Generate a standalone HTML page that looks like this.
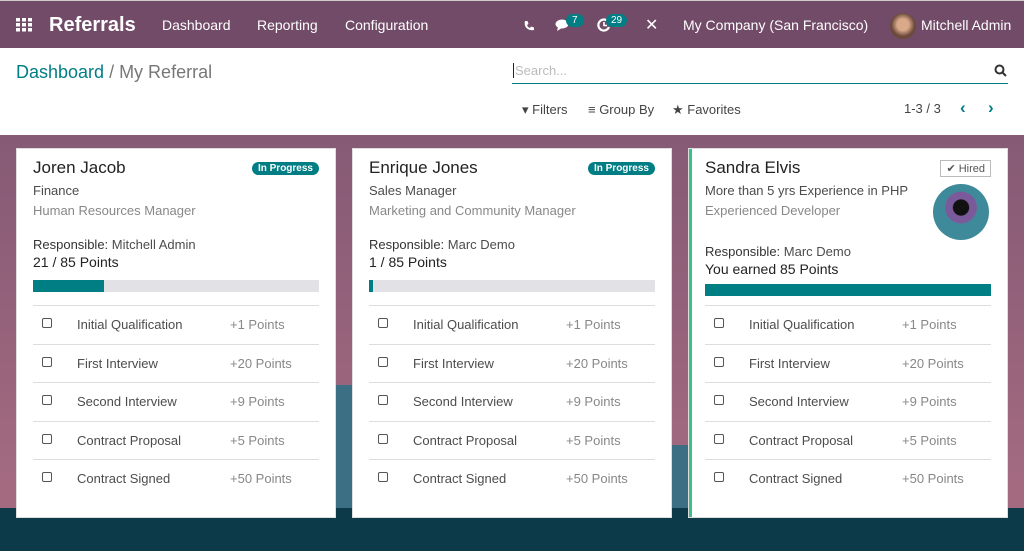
<!DOCTYPE html><html><head><style>
*{box-sizing:border-box;margin:0;padding:0}
body{width:1024px;height:551px;overflow:hidden;font-family:"Liberation Sans",sans-serif;font-size:13px;color:#4c4c4c;position:relative;background:#fff}
.nav{position:absolute;top:0;left:0;width:1024px;height:48px;background:#714b67;color:#fff;border-top:1px solid #ccc}
.nav span{position:absolute;top:16px;font-size:14px}
.cp{position:absolute;top:48px;left:0;width:1024px;height:87px;background:#fff}
.bg{position:absolute;top:135px;left:0;width:1024px;height:416px;background:linear-gradient(180deg,#865a75 0%,#93617a 40%,#a46b80 85%)}
.ground{position:absolute;left:0;top:508px;width:1024px;height:43px;background:#0d3a49}
.card{position:absolute;top:148px;width:320px;height:370px;background:#fff;border:1px solid #ddd;padding:0 16px}
.name{position:absolute;left:16px;top:9px;font-size:17px;color:#222}
.badge{position:absolute;right:16px;top:13px;background:#017e84;color:#fff;font-size:10px;font-weight:bold;padding:1px 6px;border-radius:8px}
.l1{position:absolute;left:16px;top:34px;color:#4c4c4c}
.l2{position:absolute;left:16px;top:54px;color:#888}
.resp{position:absolute;left:16px;top:88px;color:#4c4c4c}
.resp b{font-weight:normal;color:#333}
.pts{position:absolute;left:16px;top:105px;font-size:14px;color:#222}
.bar{position:absolute;left:16px;top:131px;width:286px;height:12px;background:#e2e2e6}
.bar i{display:block;height:100%;background:#017e84}
.rows{position:absolute;left:16px;top:156px;width:286px}
.row{height:38.5px;border-top:1px solid #ddd;position:relative}
.row .cb{position:absolute;left:9px;top:12px;width:10px;height:10px;border:1.3px solid #555;border-radius:2px}
.row .t{position:absolute;left:44px;top:11px;color:#4c4c4c}
.row .p{position:absolute;left:197px;top:11px;color:#888}
</style></head><body>
<div class="nav">
<svg style="position:absolute;left:16px;top:17px" width="16" height="14"><g fill="#fff"><rect x="0" y="0" width="4" height="3.5"/><rect x="6" y="0" width="4" height="3.5"/><rect x="12" y="0" width="4" height="3.5"/><rect x="0" y="5" width="4" height="3.5"/><rect x="6" y="5" width="4" height="3.5"/><rect x="12" y="5" width="4" height="3.5"/><rect x="0" y="10" width="4" height="3.5"/><rect x="6" y="10" width="4" height="3.5"/><rect x="12" y="10" width="4" height="3.5"/></g></svg>
<span style="left:49px;top:13px;font-size:20px;font-weight:bold">Referrals</span>
<span style="left:162px">Dashboard</span><span style="left:257px">Reporting</span><span style="left:345px">Configuration</span>
<svg style="position:absolute;left:523px;top:19px" width="12" height="12"><path d="M2 1 L4.5 1 L5.5 4 L4 5 Q5 7.5 7 8 L8 6.5 L11 7.5 L11 10 Q6 11 3 7.5 Q1 4.5 2 1Z" fill="#fff"/></svg>
<svg style="position:absolute;left:555px;top:17px" width="16" height="14"><ellipse cx="7" cy="6" rx="6.5" ry="4.5" fill="#fff"/><path d="M3 9 L2 13 L7 10Z" fill="#fff"/></svg>
<div style="position:absolute;left:566px;top:13px;background:#017e84;color:#fff;font-size:10px;padding:1px 6px;border-radius:8px">7</div>
<svg style="position:absolute;left:597px;top:17px" width="14" height="14"><path d="M10 2.5 A5.5 5.5 0 1 0 12 9" fill="none" stroke="#fff" stroke-width="2.2"/><path d="M7 4 V7.5 H10" fill="none" stroke="#fff" stroke-width="1.6"/></svg>
<div style="position:absolute;left:606px;top:13px;background:#017e84;color:#fff;font-size:10px;padding:1px 5px;border-radius:8px">29</div>
<span style="left:645px;font-size:16px;top:14px">✕</span>
<span style="left:683px">My Company (San Francisco)</span>
<div style="position:absolute;left:890px;top:12px;width:26px;height:26px;border-radius:50%;background:radial-gradient(circle at 50% 45%,#d9a98a 30%,#6b4a3c 60%)"></div>
<span style="left:921px">Mitchell Admin</span>
</div>
<div class="cp">
<div style="position:absolute;left:16px;top:14px;font-size:18px;color:#017e84">Dashboard <span style="color:#777">/ My Referral</span></div>
<div style="position:absolute;left:512px;top:10px;width:496px;height:26px;border-bottom:1px solid #017e84"><div style="position:absolute;left:1px;top:5px;width:1px;height:15px;background:#222"></div><span style="position:absolute;left:3px;top:5px;color:#bbb;font-size:13px">Search...</span>
<svg style="position:absolute;right:1px;top:6px" width="13" height="13"><circle cx="5.5" cy="5.5" r="4" fill="none" stroke="#333" stroke-width="2"/><line x1="8.5" y1="8.5" x2="12" y2="12" stroke="#333" stroke-width="2"/></svg></div>
<div style="position:absolute;left:522px;top:54px;color:#444;font-size:13px">▾ Filters</div>
<div style="position:absolute;left:588px;top:54px;color:#444;font-size:13px">≡ Group By</div>
<div style="position:absolute;left:672px;top:54px;color:#444;font-size:13px">★ Favorites</div>
<div style="position:absolute;left:904px;top:53px;color:#444;font-size:13px">1-3 / 3</div>
<div style="position:absolute;left:960px;top:50px;color:#017e84;font-size:17px;font-weight:bold">‹</div>
<div style="position:absolute;left:988px;top:50px;color:#017e84;font-size:17px;font-weight:bold">›</div>
</div>
<div class="bg"></div>
<div style="position:absolute;left:335px;top:385px;width:18px;height:130px;background:#3d6f84"></div>
<div style="position:absolute;left:671px;top:445px;width:18px;height:70px;background:#3d6f84"></div>
<div class="ground"></div>

<div class="card" style="left:16px">
<div class="name">Joren Jacob</div><div class="badge">In Progress</div>
<div class="l1">Finance</div><div class="l2">Human Resources Manager</div>
<div class="resp"><b>Responsible:</b> Mitchell Admin</div><div class="pts">21 / 85 Points</div>
<div class="bar"><i style="width:71px"></i></div>
<div class="rows">
<div class="row"><div class="cb"></div><div class="t">Initial Qualification</div><div class="p">+1 Points</div></div>
<div class="row"><div class="cb"></div><div class="t">First Interview</div><div class="p">+20 Points</div></div>
<div class="row"><div class="cb"></div><div class="t">Second Interview</div><div class="p">+9 Points</div></div>
<div class="row"><div class="cb"></div><div class="t">Contract Proposal</div><div class="p">+5 Points</div></div>
<div class="row"><div class="cb"></div><div class="t">Contract Signed</div><div class="p">+50 Points</div></div>
</div></div>

<div class="card" style="left:352px">
<div class="name">Enrique Jones</div><div class="badge">In Progress</div>
<div class="l1">Sales Manager</div><div class="l2">Marketing and Community Manager</div>
<div class="resp"><b>Responsible:</b> Marc Demo</div><div class="pts">1 / 85 Points</div>
<div class="bar"><i style="width:4px"></i></div>
<div class="rows">
<div class="row"><div class="cb"></div><div class="t">Initial Qualification</div><div class="p">+1 Points</div></div>
<div class="row"><div class="cb"></div><div class="t">First Interview</div><div class="p">+20 Points</div></div>
<div class="row"><div class="cb"></div><div class="t">Second Interview</div><div class="p">+9 Points</div></div>
<div class="row"><div class="cb"></div><div class="t">Contract Proposal</div><div class="p">+5 Points</div></div>
<div class="row"><div class="cb"></div><div class="t">Contract Signed</div><div class="p">+50 Points</div></div>
</div></div>

<div class="card" style="left:688px;box-shadow:inset 3px 0 0 #3cbf8a">
<div class="name">Sandra Elvis</div>
<div style="position:absolute;right:16px;top:11px;border:1px solid #bbb;font-size:11px;color:#555;padding:1px 5px">✔ Hired</div>
<div class="l1">More than 5 yrs Experience in PHP</div><div class="l2">Experienced Developer</div>
<div style="position:absolute;left:244px;top:35px;width:56px;height:56px;border-radius:50%;background:radial-gradient(circle at 50% 42%,#111 18%,#7a5a9a 20%,#7a5a9a 36%,#3f8a9a 38%)"></div>
<div class="resp" style="top:95px"><b>Responsible:</b> Marc Demo</div><div class="pts" style="top:112px">You earned 85 Points</div>
<div class="bar" style="top:135px;background:#017e84"></div>
<div class="rows">
<div class="row"><div class="cb"></div><div class="t">Initial Qualification</div><div class="p">+1 Points</div></div>
<div class="row"><div class="cb"></div><div class="t">First Interview</div><div class="p">+20 Points</div></div>
<div class="row"><div class="cb"></div><div class="t">Second Interview</div><div class="p">+9 Points</div></div>
<div class="row"><div class="cb"></div><div class="t">Contract Proposal</div><div class="p">+5 Points</div></div>
<div class="row"><div class="cb"></div><div class="t">Contract Signed</div><div class="p">+50 Points</div></div>
</div></div>
</body></html>
